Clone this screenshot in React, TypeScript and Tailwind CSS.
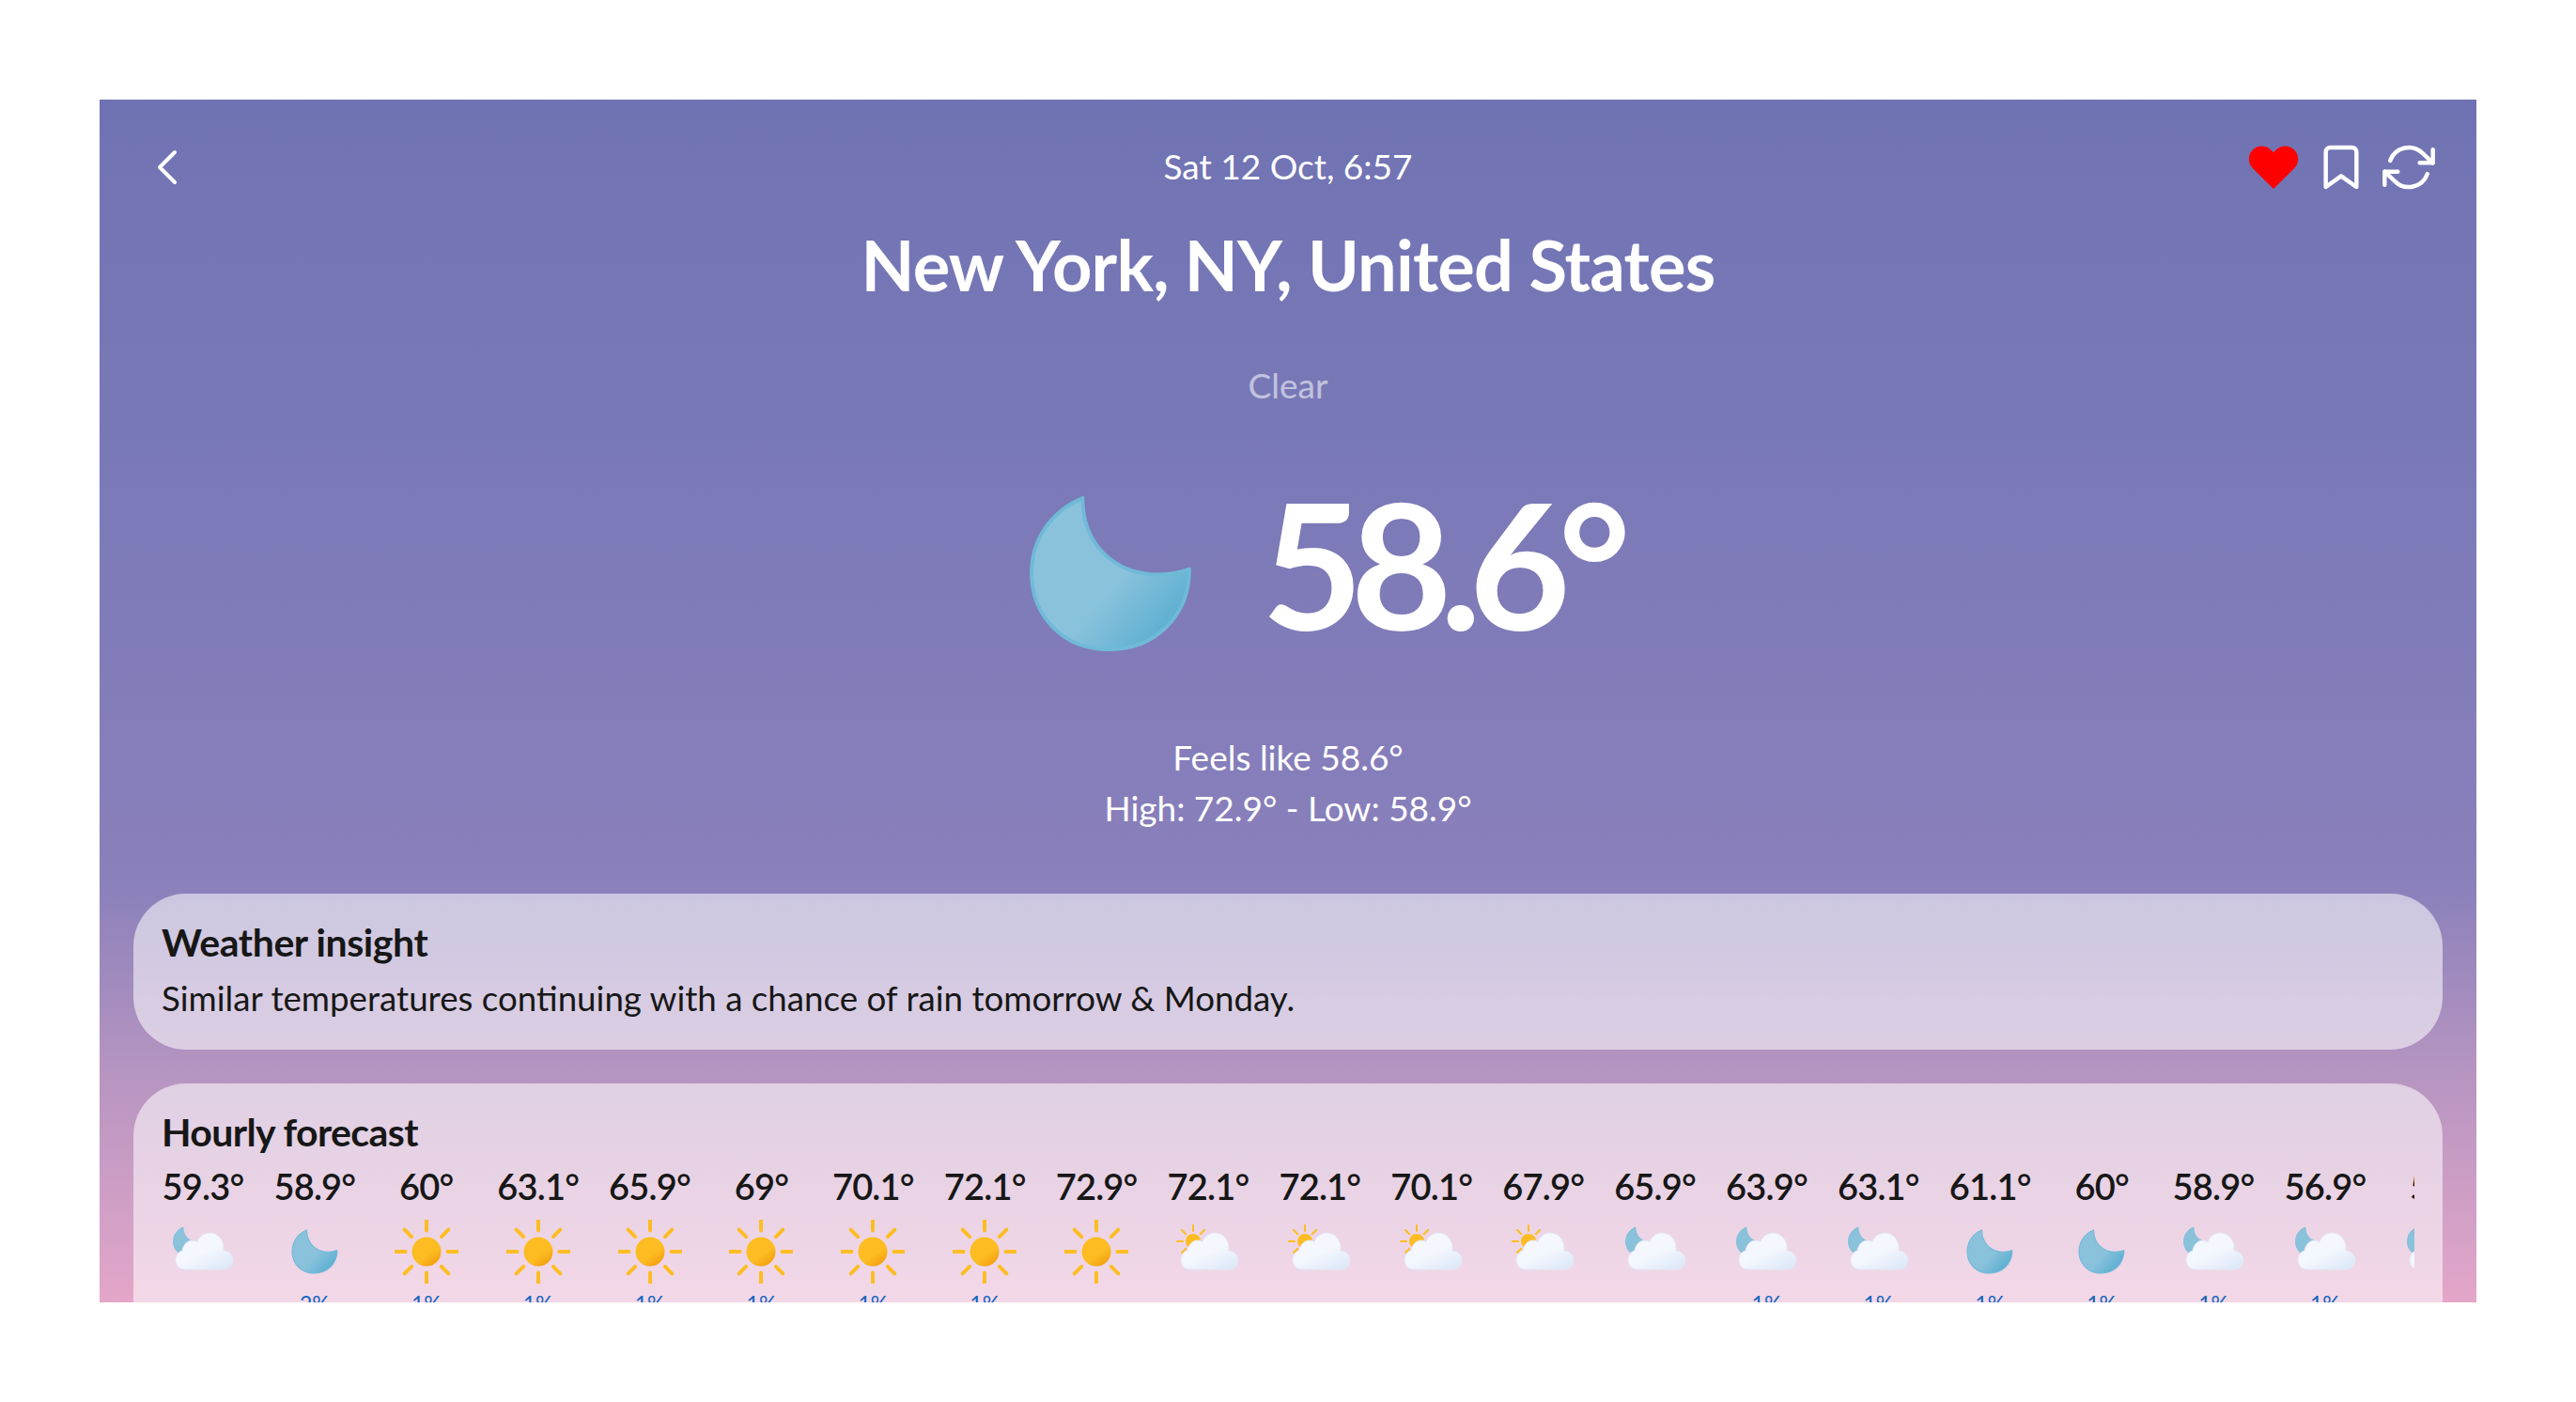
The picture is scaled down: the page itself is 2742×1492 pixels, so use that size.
import { useId } from 'react';
import { ChevronLeft } from 'lucide-react';
import { FiBookmark, FiRefreshCw } from 'react-icons/fi';

type IconKind = 'moon' | 'sun' | 'cloudMoon' | 'cloudSun';

type Hour = {
  temp: string;
  icon: IconKind;
  rain?: string;
};

const hours: Hour[] = [
  { temp: '59.3°', icon: 'cloudMoon' },
  { temp: '58.9°', icon: 'moon', rain: '2%' },
  { temp: '60°', icon: 'sun', rain: '1%' },
  { temp: '63.1°', icon: 'sun', rain: '1%' },
  { temp: '65.9°', icon: 'sun', rain: '1%' },
  { temp: '69°', icon: 'sun', rain: '1%' },
  { temp: '70.1°', icon: 'sun', rain: '1%' },
  { temp: '72.1°', icon: 'sun', rain: '1%' },
  { temp: '72.9°', icon: 'sun' },
  { temp: '72.1°', icon: 'cloudSun' },
  { temp: '72.1°', icon: 'cloudSun' },
  { temp: '70.1°', icon: 'cloudSun' },
  { temp: '67.9°', icon: 'cloudSun' },
  { temp: '65.9°', icon: 'cloudMoon' },
  { temp: '63.9°', icon: 'cloudMoon', rain: '1%' },
  { temp: '63.1°', icon: 'cloudMoon', rain: '1%' },
  { temp: '61.1°', icon: 'moon', rain: '1%' },
  { temp: '60°', icon: 'moon', rain: '1%' },
  { temp: '58.9°', icon: 'cloudMoon', rain: '1%' },
  { temp: '56.9°', icon: 'cloudMoon', rain: '1%' },
  { temp: '55°', icon: 'cloudMoon' },
];

const MOON_PATH =
  'M56 0C56 50 90 84 139 84C152 84 163 82 173 78C173 130 135 166 85 166C35 166 0 130 0 82C0 45 22 14 56 0Z';
const CLOUD_PATH =
  'M10 39C4 39 0 35 0 29C0 24 3 20 7 19C8 13 12 8 18 8C20 8 22 9 23 9.5C25 4 30 0 36 0C44 0 50 6 51 14L51 19C57 19 61 24 61 29C61 35 57 39 51 39Z';

const sunRays = [0, 45, 90, 135, 180, 225, 270, 315];

const MoonShape = ({ id }: { id: string }) => (
  <>
    <defs>
      <linearGradient id={id} x1="0.25" y1="0.35" x2="0.85" y2="0.85">
        <stop offset="0.45" stopColor="#8ac2dc" />
        <stop offset="1" stopColor="#5fb0d2" />
      </linearGradient>
    </defs>
    <path d={MOON_PATH} fill={`url(#${id})`} stroke="#70bad8" strokeWidth="4" strokeLinejoin="round" />
  </>
);

const CloudShape = ({ id }: { id: string }) => (
  <>
    <defs>
      <linearGradient id={id} x1="0.3" y1="0.3" x2="0.8" y2="1">
        <stop offset="0.35" stopColor="#f4f7fe" />
        <stop offset="1" stopColor="#dde9f8" />
      </linearGradient>
    </defs>
    <path d={CLOUD_PATH} fill={`url(#${id})`} stroke="#e6e6f4" strokeWidth="1" />
  </>
);

const WeatherIcon = ({ kind }: { kind: IconKind }) => {
  const id = useId();

  return (
    <svg width="68" height="68" viewBox="0 0 68 68" className="shrink-0">
      {kind === 'moon' && (
        <g transform="translate(10 11) scale(0.277)">
          <MoonShape id={`${id}m`} />
        </g>
      )}
      {kind === 'sun' && (
        <>
          <defs>
            <linearGradient id={`${id}s`} x1="0.3" y1="0.3" x2="0.8" y2="1">
              <stop offset="0.45" stopColor="#fdbd22" />
              <stop offset="1" stopColor="#f29c0f" />
            </linearGradient>
          </defs>
          {sunRays.map((deg) => (
            <line
              key={deg}
              x1="34"
              y1="1"
              x2="34"
              y2="11.5"
              stroke="#fdbd22"
              strokeWidth="4"
              strokeLinecap="round"
              transform={`rotate(${deg} 34 34)`}
            />
          ))}
          <circle cx="34" cy="34" r="15.5" fill={`url(#${id}s)`} />
        </>
      )}
      {kind === 'cloudSun' && (
        <>
          {[-135, -90, -45, 0, 45, 180].map((deg) => (
            <line
              key={deg}
              x1="18"
              y1="6"
              x2="18"
              y2="12"
              stroke="#fdbd22"
              strokeWidth="2"
              strokeLinecap="round"
              transform={`rotate(${deg} 18 23)`}
            />
          ))}
          <circle cx="18" cy="23" r="8" fill="#fdbd22" />
          <g transform="translate(5 14)">
            <CloudShape id={`${id}c`} />
          </g>
        </>
      )}
      {kind === 'cloudMoon' && (
        <>
          <g transform="translate(2.5 8) scale(0.185)">
            <MoonShape id={`${id}m`} />
          </g>
          <g transform="translate(5 14)">
            <CloudShape id={`${id}c`} />
          </g>
        </>
      )}
    </svg>
  );
};

const HourItem = ({ temp, icon, rain }: Hour) => (
  <div className="flex w-[88px] shrink-0 flex-col items-center">
    <span className="whitespace-nowrap text-[38px] font-semibold leading-[44px] tracking-[-0.8px] text-[#171717]">
      {temp}
    </span>
    <div className="mt-[14px]">
      <WeatherIcon kind={icon} />
    </div>
    <span className="mt-[8px] h-[26px] text-[23px] leading-[26px] text-[#1565c0]">{rain}</span>
  </div>
);

const App = () => {
  return (
    <div className="bg-white p-[106px] font-['Lato','Noto_Sans',sans-serif]">
      <div className="flex h-[1280px] flex-col overflow-hidden bg-[linear-gradient(180deg,#7073b3_0%,#7c7ab8_35%,#8a80bb_65%,#b695c1_81%,#e4a6c9_100%)]">
        <header className="grid grid-cols-[1fr_auto_1fr] items-center px-[42px] pt-[42px]">
          <ChevronLeft size={64} strokeWidth={1.5} className="-m-[2px] text-white" />
          <span className="pb-[2px] text-[37px] leading-[58px] text-white">Sat 12 Oct, 6:57</span>
          <div className="flex items-center justify-end gap-4 text-white">
            <svg width="60" height="60" viewBox="0 0 24 24" fill="#ff0000" className="-mr-[2px]">
              <path d="M20.84 4.61a5.5 5.5 0 0 0-7.78 0L12 5.67l-1.06-1.06a5.5 5.5 0 0 0-7.78 7.78l1.06 1.06L12 21.23l7.78-7.78 1.06-1.06a5.5 5.5 0 0 0 0-7.78z" />
            </svg>
            <FiBookmark size={56} strokeWidth={1.9} />
            <FiRefreshCw size={56} strokeWidth={1.9} className="mr-[2px]" />
          </div>
        </header>

        <h1 className="mt-[34px] text-center text-[74px] font-bold leading-[80px] tracking-[-0.8px] text-white">
          New York, NY, United States
        </h1>
        <p className="mt-[63px] text-center text-[37px] leading-[50px] text-white/55">Clear</p>

        <div className="mt-[69px] flex items-start justify-center gap-[75px] pl-[77px]">
          <svg width="172" height="165" viewBox="-2 -2 177 170" className="mt-[24px]">
            <MoonShape id="bigMoon" />
          </svg>
          <span className="text-[186px] font-bold leading-[190px] tracking-[-13px] text-white">58.6°</span>
        </div>

        <div className="mt-[85px] text-center text-[37px] leading-[54px] text-white">
          <p>Feels like 58.6°</p>
          <p>High: 72.9° - Low: 58.9°</p>
        </div>

        <section className="mx-[36px] mt-[64px] rounded-[56px] bg-white/55 px-[30px] pb-[28px] pt-[25px] text-[#171717]">
          <h2 className="text-[41px] font-bold leading-[54px] tracking-[-0.4px]">Weather insight</h2>
          <p className="mt-[5px] text-[36.7px] leading-[54px]">
            Similar temperatures continuing with a chance of rain tomorrow &amp; Monday.
          </p>
        </section>

        <section className="mx-[36px] mt-[36px] flex-1 rounded-t-[56px] bg-white/55 px-[30px] pt-[25px] text-[#171717]">
          <h2 className="text-[41px] font-bold leading-[54px] tracking-[-0.6px]">Hourly forecast</h2>
          <div className="mt-[8px] flex gap-[30.9px] overflow-hidden">
            {hours.map((hour, i) => (
              <HourItem key={i} {...hour} />
            ))}
          </div>
        </section>
      </div>
    </div>
  );
};

export default App;
